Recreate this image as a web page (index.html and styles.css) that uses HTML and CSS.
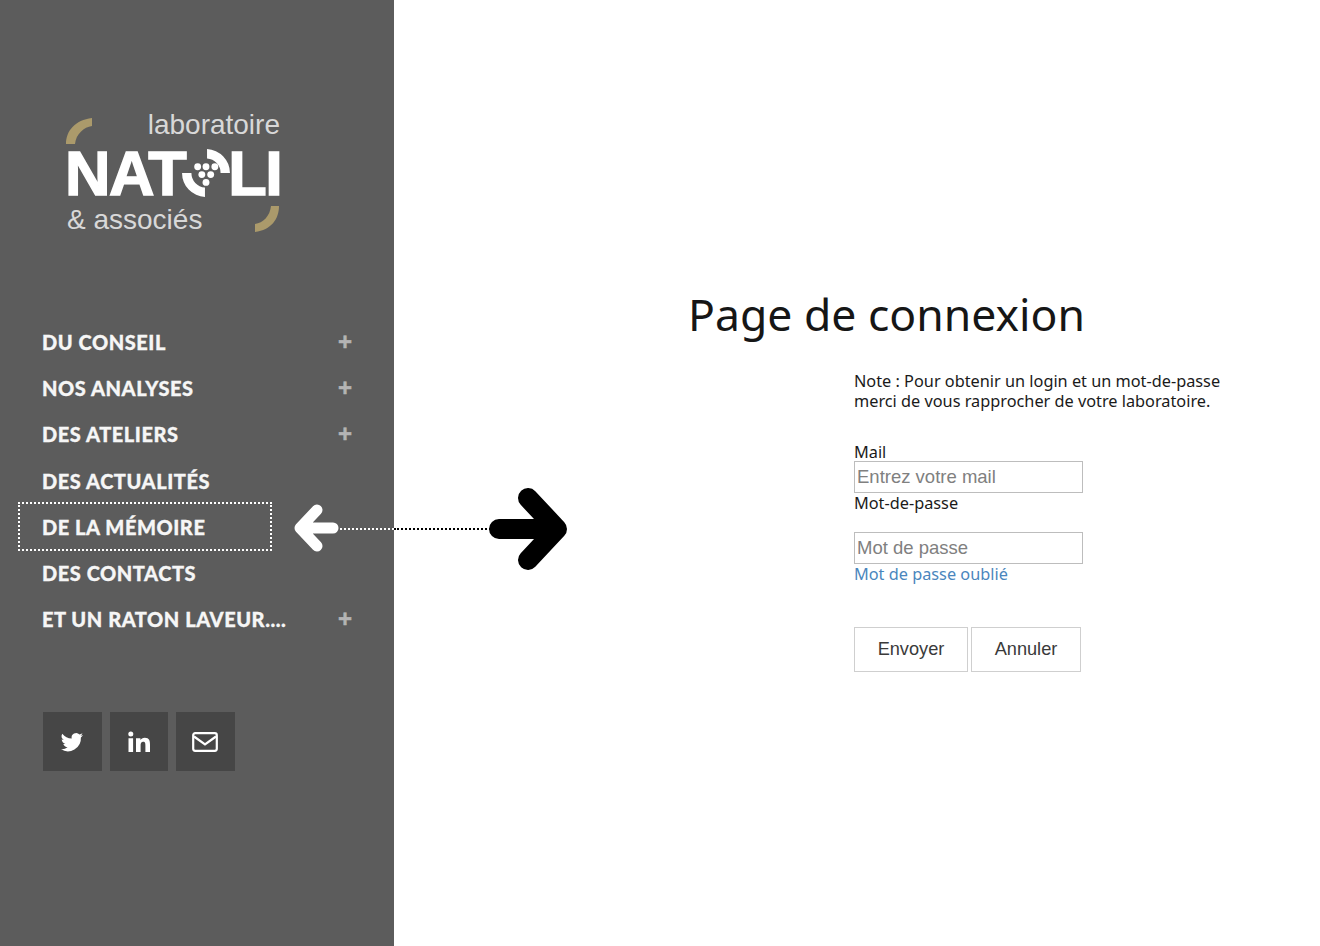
FILE: index.html
```html
<!DOCTYPE html>
<html lang="fr">
<head>
<meta charset="utf-8">
<title>Page de connexion</title>
<link rel="stylesheet" href="styles.css">
</head>
<body>
<div class="page">
  <aside class="sidebar">
    <div class="logo">
      <svg class="arc arc-top" viewBox="0 0 26 28"><path d="M0 26C0 13 9 2 26 0L26 8C18 9 10 16 9 26Z"/></svg>
      <svg class="arc arc-bottom" viewBox="0 0 26 28"><path d="M25 1C25 14 17 25 1 27L1 19C9 18 16 11 17 1Z"/></svg>
      <div class="logo-top">laboratoire</div>
      <div class="logo-main">
        <span>NAT</span>
        <svg class="logo-o" viewBox="0 0 48 48">
          <path class="o-ring" d="M25 1A23 23 0 0 1 47 24L38 24A14 14 0 0 0 25 10Z"/>
          <path class="o-ring" d="M1 24L10 24A14 14 0 0 0 23 38L23 47A23 23 0 0 1 1 24Z"/>
          <g class="o-grapes"><circle cx="16" cy="18" r="3.300"/><circle cx="24" cy="18" r="3.300"/><circle cx="32.500" cy="18" r="3.300"/><circle cx="20" cy="25.500" r="3.300"/><circle cx="28.500" cy="25.500" r="3.300"/><circle cx="24" cy="33" r="3.300"/></g>
        </svg>
        <span>LI</span>
      </div>
      <div class="logo-bottom">&amp; associés</div>
    </div>
    <nav class="menu">
      <a class="menu-item"><span>DU CONSEIL</span><b class="plus">+</b></a>
      <a class="menu-item"><span>NOS ANALYSES</span><b class="plus">+</b></a>
      <a class="menu-item"><span>DES ATELIERS</span><b class="plus">+</b></a>
      <a class="menu-item"><span>DES ACTUALITÉS</span></a>
      <a class="menu-item"><span>DE LA MÉMOIRE</span></a>
      <a class="menu-item"><span>DES CONTACTS</span></a>
      <a class="menu-item"><span>ET UN RATON LAVEUR....</span><b class="plus">+</b></a>
    </nav>
    <div class="socials">
      <a class="social"><svg viewBox="0 0 24 24" width="24" height="24"><path fill="#fff" d="M23 5.100c-.8.4-1.700.6-2.600.7.900-.6 1.700-1.500 2-2.500-.9.5-1.900.9-2.900 1.100A4.600 4.600 0 0 0 11.700 8.600 13 13 0 0 1 2.300 3.800a4.600 4.600 0 0 0 1.400 6.100c-.7 0-1.400-.2-2-.6 0 2.200 1.600 4.100 3.700 4.600-.7.2-1.400.2-2.100.1.600 1.800 2.300 3.100 4.300 3.200A9.200 9.200 0 0 1 .8 19.100 13 13 0 0 0 20.900 7.500c.9-.6 1.600-1.400 2.100-2.400Z"/></svg></a>
      <a class="social"><svg viewBox="0 0 24 24" width="24" height="24"><path fill="#fff" d="M1.500 8.200h4.600V22H1.500ZM3.800 1.500a2.500 2.500 0 1 1 0 5 2.500 2.500 0 0 1 0-5ZM9 8.200h4.400v1.900c.7-1.200 2.200-2.300 4.400-2.300 4.600 0 5.200 3 5.200 6.900V22h-4.600v-6.500c0-1.700 0-3.800-2.200-3.800s-2.600 1.800-2.600 3.700V22H9Z"/></svg></a>
      <a class="social"><svg viewBox="0 0 26 22" width="26" height="22"><rect x="1.200" y="2.200" width="23.600" height="17.600" rx="2" fill="none" stroke="#fff" stroke-width="2.200"/><path d="M2 5.500 13 13.500 24 5.500" fill="none" stroke="#fff" stroke-width="2.200"/></svg></a>
    </div>
  </aside>
  <main class="content">
    <h1 class="title">Page de connexion</h1>
    <form class="login">
      <p class="note">Note : Pour obtenir un login et un mot-de-passe<br>merci de vous rapprocher de votre laboratoire.</p>
      <label class="label label-mail">Mail</label>
      <input class="field" type="text" placeholder="Entrez votre mail">
      <label class="label label-pass">Mot-de-passe</label>
      <input class="field" type="text" placeholder="Mot de passe">
      <a class="forgot">Mot de passe oublié</a>
      <div class="actions">
        <button class="btn btn-send" type="button">Envoyer</button>
        <button class="btn btn-cancel" type="button">Annuler</button>
      </div>
    </form>
  </main>
  <div class="focus-box"></div>
  <svg class="arrow arrow-left" viewBox="0 0 46 48"><path d="M23 6 6 24 23 42M8 24H39" fill="none" stroke="#fff" stroke-width="11" stroke-linecap="round" stroke-linejoin="round"/></svg>
  <div class="link-line link-line-light"></div>
  <div class="link-line link-line-dark"></div>
  <svg class="arrow arrow-right" viewBox="0 0 80 84"><path d="M39 11 68 42 39 73M10 42H66" fill="none" stroke="#000" stroke-width="20" stroke-linecap="round" stroke-linejoin="round"/></svg>
</div>
</body>
</html>
```
FILE: styles.css
```css
* { box-sizing: border-box; }
html, body { margin: 0; height: 100%; background: #fff; }
.page { position: relative; display: flex; width: 1320px; height: 946px; overflow: hidden; font-family: "Noto Sans", "Open Sans", sans-serif; }

.sidebar { flex: 0 0 394px; background: #5c5c5c; padding: 109px 0 0 42px; }
.logo { position: relative; width: 214px; margin-left: 24px; height: 127px; color: #d8d8d8; font-family: "Liberation Sans", sans-serif; }
.arc { position: absolute; width: 26px; height: 28px; }
.arc path { fill: #ab9a6b; }
.arc-top { left: 0; top: 8px; }
.arc-bottom { right: 0; top: 95px; }
.logo-top { margin-top: 1px; text-align: right; font-size: 28px; line-height: 30px; letter-spacing: 0; font-weight: 400; }
.logo-main { display: flex; align-items: center; height: 56px; margin: 5px 1px 0 -1px; color: #fff; font-size: 63px; font-weight: 700; letter-spacing: -1.500px; line-height: 56px; justify-content: space-between; -webkit-text-stroke: 1.500px #fff; }
.logo-o { width: 50px; height: 50px; margin: 0 -3px 0 -4px; flex: none; }
.o-ring, .o-grapes { fill: #fff; }
.logo-bottom { font-size: 28px; line-height: 32px; margin: 3px 0 0 1px; }

.menu { display: flex; flex-direction: column; margin-top: 82px; width: 310px; }
.menu-item { display: flex; align-items: center; justify-content: space-between; height: 46.200px; color: #f6f6f6; font-family: "Lato", sans-serif; font-size: 20px; font-weight: 900; letter-spacing: 0.550px; -webkit-text-stroke: 0.300px #f6f6f6; }
.plus { width: 14px; text-align: center; color: #b4b4b4; font-family: "Liberation Sans", sans-serif; font-size: 24px; line-height: 24px; font-weight: 700; letter-spacing: 0; -webkit-text-stroke: 0.500px #b4b4b4; }

.socials { display: flex; gap: 8px; margin-top: 70px; margin-left: 1px; }
.social { display: flex; align-items: center; justify-content: center; width: 58.500px; height: 58.500px; background: #464646; }

.content { flex: 1; padding: 286px 0 0 294px; color: #111; }
.title { margin: 0; font-size: 44.500px; font-weight: 400; line-height: 56px; color: #161616; font-family: "Noto Sans", sans-serif; }
.login { display: flex; flex-direction: column; align-items: flex-start; margin: 29px 0 0 166px; font-size: 16.300px; }
.note { margin: 0; line-height: 20px; font-size: 16.300px; white-space: nowrap; color: #1a1a1a; }
.label { font-size: 16.300px; line-height: 20px; color: #1a1a1a; }
.label-mail { margin-top: 31px; height: 19px; }
.label-pass { margin-top: 0; margin-bottom: 19px; }
.field { width: 228.500px; height: 32px; padding: 0 2px; border: 1px solid #bdbdbd; font: 18.500px "Liberation Sans", sans-serif; color: #333; outline: none; }
.field::placeholder { color: #808080; opacity: 1; }
.forgot { font-size: 16.300px; line-height: 20px; margin-top: 0; color: #4a86bd; }
.actions { display: flex; gap: 3px; margin-top: 43px; }
.btn { height: 45px; background: #fff; border: 1px solid #cfcfcf; font: 18.200px "Liberation Sans", sans-serif; color: #3a3a3a; padding: 0; }
.btn-send { width: 114px; }
.btn-cancel { width: 110px; }

.focus-box { position: absolute; left: 18px; top: 502px; width: 254px; height: 49px; border: 2px dotted #fff; }
.arrow { position: absolute; }
.arrow-left { left: 294px; top: 504px; width: 46px; height: 48px; }
.arrow-right { left: 489px; top: 487px; width: 80px; height: 84px; }
.link-line { position: absolute; top: 528px; height: 2px; }
.link-line-light { left: 340px; width: 54px; border-top: 2px dotted #fff; }
.link-line-dark { left: 394px; width: 100px; border-top: 2px dotted #000; }
```
